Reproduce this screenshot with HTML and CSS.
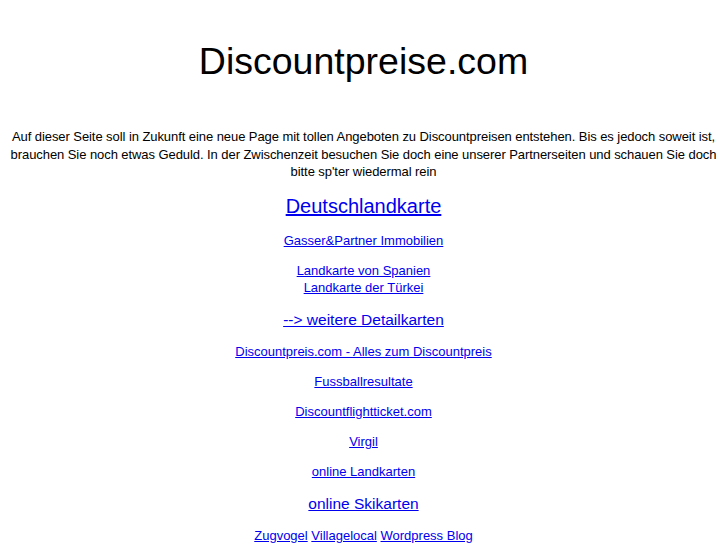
FILE: index.html
```html
<!DOCTYPE html>
<html lang="de">
<head>
<meta charset="utf-8">
<title>Discountpreise.com</title>
<link rel="stylesheet" href="styles.css">
</head>
<body>
<div class="page">
  <h1 class="title">Discountpreise.com</h1>
  <p class="intro">Auf dieser Seite soll in Zukunft eine neue Page mit tollen Angeboten zu Discountpreisen entstehen. Bis es jedoch soweit ist, brauchen Sie noch etwas Geduld. In der Zwischenzeit besuchen Sie doch eine unserer Partnerseiten und schauen Sie doch bitte sp'ter wiedermal rein</p>
  <p class="row big"><a href="#">Deutschlandkarte</a></p>
  <p class="row"><a href="#">Gasser&amp;Partner Immobilien</a></p>
  <p class="row"><a href="#">Landkarte von Spanien</a><br><a href="#">Landkarte der Türkei</a></p>
  <p class="row mid"><a href="#">--&gt; weitere Detailkarten</a></p>
  <p class="row"><a href="#">Discountpreis.com - Alles zum Discountpreis</a></p>
  <p class="row"><a href="#">Fussballresultate</a></p>
  <p class="row"><a href="#">Discountflightticket.com </a></p>
  <p class="row"><a href="#">Virgil</a></p>
  <p class="row"><a href="#">online Landkarten</a></p>
  <p class="row mid"><a href="#">online Skikarten</a></p>
  <p class="row"><a href="#">Zugvogel</a> <a href="#">Villagelocal</a> <a href="#">Wordpress Blog</a></p>
</div>
</body>
</html>
```

FILE: styles.css
```css
html, body {
  margin: 0;
  padding: 0;
  background: #ffffff;
}

.page {
  padding: 40px 7px 0;
  font-family: "Liberation Sans", Arial, sans-serif;
  color: #000000;
  text-align: center;
}

.title {
  margin: 0 0 45px;
  font-size: 37.5px;
  font-weight: normal;
  line-height: 43px;
}

.intro {
  margin: 0;
  font-size: 13px;
  line-height: 17.5px;
  letter-spacing: -0.07px;
}

.row {
  margin: 13px 0 0;
  font-size: 13px;
  line-height: 17px;
}

.row.big {
  font-size: 20px;
  line-height: 25px;
}

.row.mid {
  font-size: 15.5px;
  line-height: 21px;
}

a {
  color: #0000ee;
  text-decoration: underline;
}
```
